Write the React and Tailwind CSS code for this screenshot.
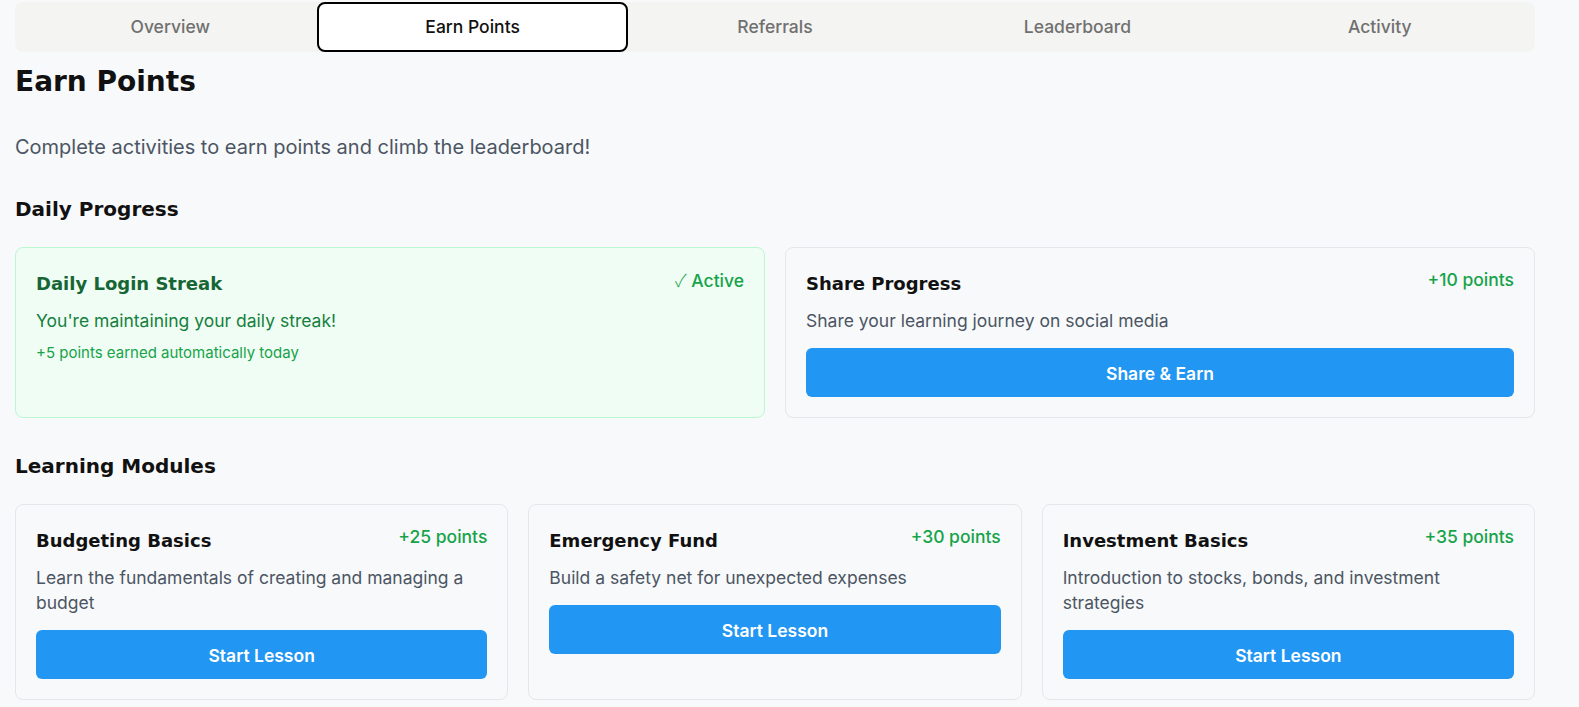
import React from "react";

const heading = { fontFamily: '"DejaVu Sans", "Open Sans", sans-serif' };

const tabs = ["Overview", "Earn Points", "Referrals", "Leaderboard", "Activity"];

const modules = [
  { title: "Budgeting Basics", points: "+25 points", desc: "Learn the fundamentals of creating and managing a budget" },
  { title: "Emergency Fund", points: "+30 points", desc: "Build a safety net for unexpected expenses" },
  { title: "Investment Basics", points: "+35 points", desc: "Introduction to stocks, bonds, and investment strategies" },
];

function CardHeader({ title, right, titleClass, rightClass }) {
  return (
    <div className="flex items-start justify-between mb-[10px]">
      <h3 className={`pt-[2px] text-[18px] leading-7 font-bold ${titleClass}`} style={heading}>
        {title}
      </h3>
      <span className={`text-[17.5px] leading-6 font-medium ${rightClass}`}>{right}</span>
    </div>
  );
}

function Button({ children }) {
  return (
    <button className="w-full h-[49px] pt-1 rounded-md bg-[#2196f3] text-white text-[17.5px] font-semibold">
      {children}
    </button>
  );
}

export default function App() {
  return (
    <div
      className="min-h-screen bg-[#f8f9fa] pt-[2px] pl-[15px]"
      style={{ fontFamily: 'Inter, "Liberation Sans", sans-serif' }}
    >
      <div className="w-[1520px]">
        <div className="grid grid-cols-5 rounded-lg bg-[#f4f4f2] p-1">
          {tabs.map((t) =>
            t === "Earn Points" ? (
              <div
                key={t}
                className="-m-1 flex items-center justify-center rounded-lg border-2 border-black bg-white text-[17.5px] font-medium text-[#111111]"
              >
                {t}
              </div>
            ) : (
              <div
                key={t}
                className="h-[42px] flex items-center justify-center rounded-lg text-[17.5px] font-medium text-[#707070]"
              >
                {t}
              </div>
            )
          )}
        </div>

        <h1 className="mt-[12px] text-[28px] leading-9 font-bold text-[#111111]" style={heading}>
          Earn Points
        </h1>
        <p className="mt-[33px] text-[20px] leading-7 text-[#4b5563]">
          Complete activities to earn points and climb the leaderboard!
        </p>

        <h2 className="mt-[34px] mb-6 text-[20px] leading-7 font-bold text-[#111111]" style={heading}>
          Daily Progress
        </h2>
        <div className="grid grid-cols-2 gap-5">
          <div className="rounded-lg border border-[#bbf7d0] bg-[#f0fdf4] p-5 h-[171px]">
            <div className="flex items-start justify-between mb-[10px]">
              <h3 className="pt-[2px] text-[18px] leading-7 font-bold text-[#166534]" style={heading}>
                Daily Login Streak
              </h3>
              <span className="text-[17.5px] leading-6 font-medium text-[#16a34a]">
                <span style={{ fontFamily: '"Noto Sans CJK SC", "DejaVu Sans", sans-serif', fontWeight: 300 }}>✓</span> Active
              </span>
            </div>
            <p className="text-[17.5px] leading-[25px] text-[#15803d] mb-[10px]">You're maintaining your daily streak!</p>
            <p className="text-[15px] leading-5 text-[#16a34a]">+5 points earned automatically today</p>
          </div>
          <div className="rounded-lg border border-[#e5e7eb] p-5">
            <CardHeader
              title="Share Progress"
              right="+10 points"
              titleClass="text-[#111111]"
              rightClass="text-[#16a34a]"
            />
            <p className="text-[17.5px] leading-[25px] text-[#4b5563] mb-[15px]">Share your learning journey on social media</p>
            <Button>Share &amp; Earn</Button>
          </div>
        </div>

        <h2 className="mt-[34px] mb-6 text-[20px] leading-7 font-bold text-[#111111]" style={heading}>
          Learning Modules
        </h2>
        <div className="grid grid-cols-3 gap-5">
          {modules.map((m) => (
            <div key={m.title} className="rounded-lg border border-[#e5e7eb] p-5">
              <CardHeader title={m.title} right={m.points} titleClass="text-[#111111]" rightClass="text-[#16a34a]" />
              <p className="text-[17.5px] leading-[25px] text-[#4b5563] mb-[15px]">{m.desc}</p>
              <Button>Start Lesson</Button>
            </div>
          ))}
        </div>
      </div>
    </div>
  );
}
